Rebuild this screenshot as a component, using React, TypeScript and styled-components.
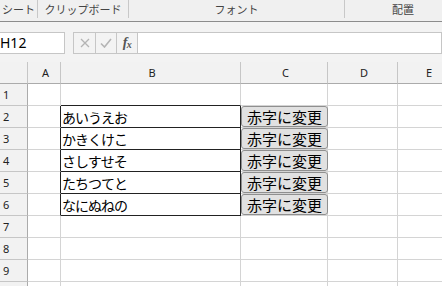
import React from "react";
import styled, { createGlobalStyle } from "styled-components";

const Global = createGlobalStyle`
  html, body { margin: 0; padding: 0; background: #ffffff; }
  body { font-family: "Noto Sans", "Noto Sans CJK JP", sans-serif; }
`;

const Page = styled.div`
  width: 442px;
  height: 286px;
  overflow: hidden;
  background: #ffffff;
  display: flex;
  flex-direction: column;
`;

const Ribbon = styled.div`
  height: 21px;
  flex: none;
  background: #f0f0f0;
  border-bottom: 1px solid #8c8c8c;
  display: flex;
  align-items: flex-start;
`;

const RibbonGroup = styled.div<{ $w: number; $align?: string }>`
  flex: none;
  width: ${(p) => p.$w}px;
  height: 18px;
  box-sizing: border-box;
  border-right: 1px solid #c8c8c8;
  display: flex;
  align-items: center;
  justify-content: ${(p) => p.$align || "center"};
  padding-right: ${(p) => (p.$align === "flex-end" ? 2 : 0)}px;
  font-family: "Noto Sans CJK JP", sans-serif;
  font-size: 11px;
  color: #444444;
  white-space: nowrap;
  overflow: visible;
`;

const FormulaBar = styled.div`
  height: 40px;
  flex: none;
  box-sizing: border-box;
  background: #f3f3f3;
  padding-top: 10px;
  display: flex;
  align-items: flex-start;
`;

const NameBox = styled.div`
  margin-left: -1px;
  width: 66px;
  height: 22px;
  box-sizing: border-box;
  border: 1px solid #c6c6c6;
  background: #ffffff;
  font-family: "Noto Sans", sans-serif;
  font-size: 14px;
  color: #000;
  display: flex;
  align-items: center;
  line-height: 1;
`;

const FxGroup = styled.div`
  margin-left: 8px;
  display: flex;
  height: 22px;
  box-sizing: border-box;
  border: 1px solid #c6c6c6;
  border-right: none;
  background: #f3f3f3;
`;

const FxButton = styled.div<{ $w: number }>`
  width: ${(p) => p.$w}px;
  height: 100%;
  box-sizing: border-box;
  border-right: 1px solid #c6c6c6;
  display: flex;
  align-items: center;
  justify-content: center;
`;

const FxText = styled.span`
  font-family: "Liberation Serif", serif;
  font-style: italic;
  font-weight: bold;
  font-size: 14px;
  line-height: 1;
  color: #555555;
  letter-spacing: -0.5px;
  sub {
    font-size: 10px;
    vertical-align: -1px;
  }
`;

const FormulaInput = styled.div`
  flex: 1;
  height: 22px;
  box-sizing: border-box;
  border: 1px solid #c6c6c6;
  border-left: none;
  background: #ffffff;
`;

const Grid = styled.div`
  display: grid;
  grid-template-columns: 28px 33px 180px 87px 70px 60px;
  grid-auto-rows: 22px;
`;

const Cell = styled.div<{ $r?: string; $b?: string }>`
  box-sizing: border-box;
  border-right: 1px solid ${(p) => p.$r || "#d4d4d4"};
  border-bottom: 1px solid ${(p) => p.$b || "#d4d4d4"};
  background: #ffffff;
  display: flex;
  align-items: center;
  overflow: visible;
  min-width: 0;
`;

const ColHead = styled(Cell)`
  background: #f2f2f2;
  justify-content: center;
  padding-left: 3px;
  font-family: "Noto Sans", sans-serif;
  font-size: 11px;
  color: #222;
`;

const RowHead = styled(Cell)`
  background: #f2f2f2;
  padding-left: 3px;
  font-family: "Noto Sans", sans-serif;
  font-size: 11px;
  color: #222;
`;

const TextCell = styled(Cell)`
  padding-left: 1px;
  font-family: "Noto Sans CJK JP", sans-serif;
  font-size: 14px;
  letter-spacing: -1px;
  color: #000;
  white-space: nowrap;
`;

const ButtonCell = styled(Cell)`
  align-items: stretch;
  position: relative;
`;

const SheetButton = styled.button`
  width: calc(100% + 1px);
  margin: 0 -1px 0 0;
  padding: 0;
  box-sizing: border-box;
  background: #e1e1e1;
  border: 1px solid #8f8f8f;
  border-radius: 3px;
  font-family: "Noto Sans CJK JP", sans-serif;
  font-size: 15px;
  color: #000;
  line-height: 1;
  display: flex;
  align-items: center;
  justify-content: center;
  position: relative;
  z-index: 1;
`;

const DARK = "#222222";
const HEAD_LINE = "#ababab";
const HEAD_SEP = "#c6c6c6";

const cols = ["A", "B", "C", "D", "E"];
const data = ["あいうえお", "かきくけこ", "さしすせそ", "たちつてと", "なにぬねの"];

export default function App() {
  const rows: React.ReactNode[] = [];
  for (let r = 1; r <= 10; r++) {
    const text = r >= 2 && r <= 6 ? data[r - 2] : null;
    rows.push(
      <React.Fragment key={r}>
        <RowHead $r={HEAD_LINE} $b={HEAD_SEP}>{r <= 9 ? r : ""}</RowHead>
        <Cell $r={text ? DARK : undefined} />
        {text ? (
          <TextCell $r={DARK} $b={DARK}>{text}</TextCell>
        ) : (
          <Cell $b={r === 1 ? DARK : undefined} />
        )}
        {text ? (
          <ButtonCell>
            <SheetButton>赤字に変更</SheetButton>
          </ButtonCell>
        ) : (
          <Cell />
        )}
        <Cell />
        <Cell />
      </React.Fragment>
    );
  }

  return (
    <Page>
      <Global />
      <Ribbon>
        <RibbonGroup $w={38} $align="flex-end">シート</RibbonGroup>
        <RibbonGroup $w={91}>クリップボード</RibbonGroup>
        <RibbonGroup $w={216}>フォント</RibbonGroup>
        <RibbonGroup $w={117}>配置</RibbonGroup>
      </Ribbon>
      <FormulaBar>
        <NameBox>H12</NameBox>
        <FxGroup>
          <FxButton $w={22}>
            <svg width="10" height="10" viewBox="0 0 10 10">
              <path d="M1 1 L9 9 M9 1 L1 9" stroke="#b4b4b4" strokeWidth="1.3" fill="none" />
            </svg>
          </FxButton>
          <FxButton $w={21}>
            <svg width="12" height="10" viewBox="0 0 12 10">
              <path d="M1 5.5 L4.5 9 L11 1" stroke="#b4b4b4" strokeWidth="1.6" fill="none" />
            </svg>
          </FxButton>
          <FxButton $w={21}>
            <FxText>
              f<sub>x</sub>
            </FxText>
          </FxButton>
        </FxGroup>
        <FormulaInput />
      </FormulaBar>
      <Grid>
        <ColHead $r={HEAD_SEP} $b={HEAD_LINE} />
        {cols.map((c) => (
          <ColHead key={c} $r={HEAD_SEP} $b={HEAD_LINE}>
            {c}
          </ColHead>
        ))}
        {rows}
      </Grid>
    </Page>
  );
}
